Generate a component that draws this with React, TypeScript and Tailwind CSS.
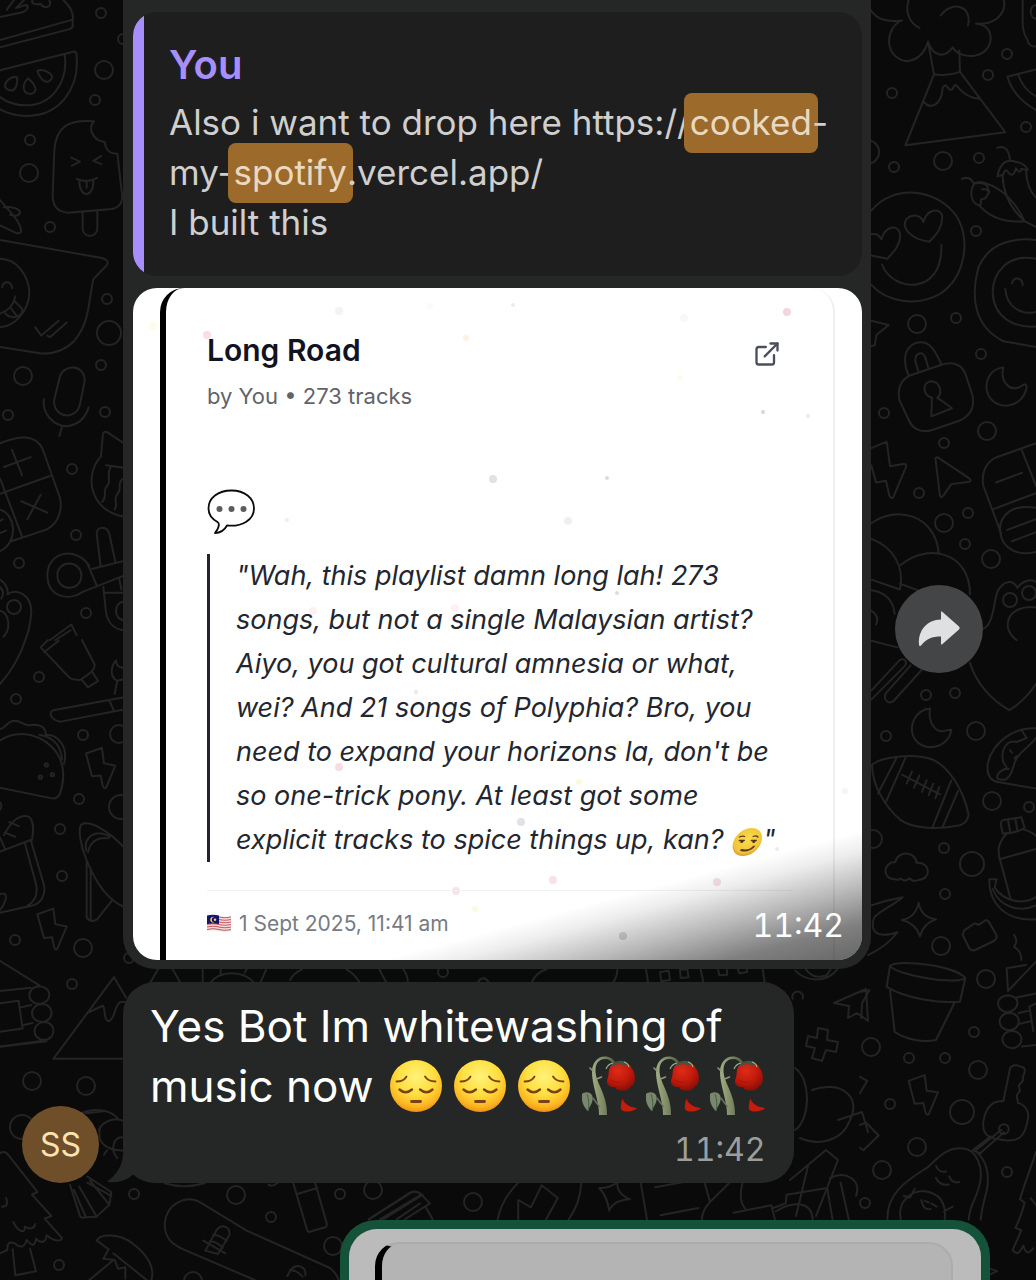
import * as React from "react"
import { ExternalLink } from "lucide-react"

// [x, y, radius] of the loose rings scattered over the wallpaper.
const RINGS = [
  [101, 13, 5], [104, 70, 9], [95, 100, 5], [30, 140, 5], [29, 173, 9], [50, 227, 5],
  [107, 299, 5], [109, 333, 12], [101, 365, 5], [23, 376, 9], [105, 412, 5], [8, 415, 5],
  [72, 469, 5], [76, 535, 5], [19, 563, 5], [86, 613, 5], [14, 607, 7], [123, 39, 5],
  [39, 677, 5], [16, 699, 5], [83, 735, 5], [119, 734, 9], [79, 799, 5], [60, 829, 5],
  [121, 807, 12], [62, 876, 5], [15, 940, 5], [83, 948, 9], [72, 984, 5], [32, 1081, 9],
  [86, 1086, 9], [22, 1127, 12], [59, 1265, 5], [129, 958, 5], [1007, 54, 5], [988, 75, 5],
  [892, 93, 5], [1026, 127, 5], [894, 167, 5], [943, 161, 9], [979, 158, 5], [867, 152, 12],
  [976, 231, 5], [917, 324, 9], [956, 318, 5], [981, 354, 5], [884, 413, 5], [944, 443, 5],
  [987, 431, 9], [919, 493, 5], [944, 523, 9], [968, 513, 5], [965, 544, 5], [991, 559, 9],
  [1010, 600, 7], [1029, 593, 7], [926, 695, 5], [955, 693, 5], [886, 736, 5], [976, 731, 9],
  [992, 801, 9], [1029, 807, 5], [944, 848, 5], [972, 864, 12], [873, 839, 9], [945, 894, 5],
  [941, 946, 9], [986, 979, 9], [974, 1032, 5], [871, 1047, 9], [909, 1058, 5], [945, 1058, 5],
  [978, 1070, 9], [890, 1104, 5], [962, 1112, 12], [917, 1147, 9], [882, 1170, 9],
  [1007, 1172, 5], [865, 1203, 5], [134, 1194, 5], [236, 1195, 9], [271, 1217, 5],
  [340, 1194, 5], [373, 1190, 9], [333, 1246, 9], [193, 1281, 9], [473, 1202, 9], [443, 972, 5],
]

// Doodles, grouped by the part of the wallpaper they sit in.
const DOODLES = [
  {
    transform: "scale(.3333 .4082)",
    paths: [
      // cake slice
      "M0 42 L68 30 C82 26 88 16 78 12 L48 20 L72 0 M20 24 L42 0 M98 0 C92 8 104 12 122 10 C130 22 154 18 150 6 L148 0 M190 0 C210 16 222 34 218 48 L0 98 M218 48 V64 Q216 70 206 72 L0 116",
      // melon slice
      "M0 172 L222 126 Q230 126 230 138 C238 220 176 284 82 284 Q34 284 0 268 M194 134 C206 206 150 258 78 258 Q32 258 0 238 M52 190 C30 184 8 206 18 216 C36 228 52 222 52 190 Z M84 192 C64 208 68 228 90 230 C112 228 114 212 84 192 Z M112 174 C128 166 158 180 156 190 C146 208 124 202 112 174 Z",
      // ice lolly
      "M282 297 C206 292 168 310 163 368 L158 478 C158 508 176 520 204 521 L336 512 Q370 506 366 476 L352 376 C334 378 318 370 314 348 C280 344 262 316 282 297 Z M248 522 V560 C250 584 290 584 292 560 V518 M214 386 L240 396 L216 406 M304 382 L280 394 L304 402 M230 438 Q262 450 292 436 M238 444 C238 486 282 486 280 442 M260 446 V460",
      // cap
      "M0 490 C30 520 60 540 64 566 Q62 574 46 570 L0 552 M12 508 C30 504 60 512 60 520 C58 530 44 530 30 526",
      // smiling note
      "M0 588 L306 632 Q330 638 320 650 L280 684 C264 748 268 790 224 834 Q184 868 124 866 L0 850 M0 634 C50 634 88 676 88 718 C86 762 44 800 0 802 M6 704 C10 688 34 686 36 706 M46 726 C40 748 24 762 0 768 M16 768 C24 776 44 780 54 774 Q70 768 66 756 L44 738 M34 756 L48 772 M106 802 L124 822 L176 786 M142 822 L150 826 L200 790",
      // microphone
      "M178 928 C186 890 256 890 254 934 L240 990 C230 1030 162 1026 162 982 Z M132 978 C124 1014 164 1044 200 1044 Q250 1040 266 998 M186 1046 L178 1068",
      // game pad
      "M0 1086 C60 1066 106 1064 128 1100 L180 1220 C190 1260 166 1290 130 1300 L34 1326 M0 1210 L150 1166 M0 1172 L66 1314 M36 1102 L66 1164 M12 1144 L92 1120 M64 1228 L142 1256 M122 1212 L82 1272 M0 1248 C50 1262 54 1330 0 1350 M0 1276 L8 1272 M0 1306 L18 1300",
      // wrapped sweet
      "M372 1086 L320 1058 Q308 1056 308 1070 L303 1118 C254 1160 264 1250 372 1266 M318 1140 L372 1146 M334 1142 C316 1160 336 1176 322 1190 C306 1200 324 1216 306 1230 M366 1174 C350 1188 368 1198 352 1210 C338 1226 356 1236 344 1248",
      // whistle and spoon
      "M268 1386 C226 1336 142 1352 142 1410 C144 1466 210 1472 248 1450 L372 1410 M262 1380 L290 1434 M172 1410 C172 1370 244 1372 244 1410 C244 1450 172 1450 172 1410 Z M276 1394 L372 1374 M302 1388 L290 1306 C292 1288 322 1288 328 1308 L346 1376 M310 1438 L318 1500 C324 1528 346 1542 372 1544 M312 1452 H372 M358 1418 L364 1444 M372 1474 C342 1474 338 1516 372 1520",
      // paw
      "M0 1420 C20 1430 26 1450 22 1456 C50 1440 94 1456 94 1500 Q90 1540 76 1568 M0 1496 C28 1502 34 1540 10 1560 M0 1438 Q16 1450 4 1466 M150 1568 L214 1530 L230 1556 M166 1568 L212 1544",
    ],
  },
  {
    transform: "translate(0 640) scale(.3333 .4082)",
    paths: [
      "M76 0 C60 40 30 80 0 108",
      // bottle
      "M122 18 L208 92 Q218 98 240 98 L262 86 Q286 72 284 60 L246 0 M122 18 L144 0 M132 30 L176 2 M246 98 L264 116 L294 100 L278 80",
      // toothbrush
      "M372 140 L160 172 C144 178 152 196 182 200 L372 170 M328 148 L342 174 M344 132 L352 100 C328 90 332 66 348 50 Q352 72 372 66 M352 100 L372 96",
      // taco
      "M0 218 C20 216 20 198 44 198 C66 198 70 212 92 208 Q136 204 138 232 C180 232 204 266 192 304 M0 246 C60 214 134 234 170 276 C200 314 190 352 180 376 Q172 390 156 388 L0 362 M118 232 C170 238 184 270 186 292 M134 306 a5 4 0 1 0 10 0 a5 4 0 1 0 -10 0 M116 336 a5 4 0 1 0 10 0 a5 4 0 1 0 -10 0 M152 330 a5 4 0 1 0 10 0 a5 4 0 1 0 -10 0",
      // lightning
      "M258 278 L306 264 L312 302 L346 308 L318 362 Q312 366 308 356 L302 332 L276 334 Z",
      // bread
      "M0 398 Q8 406 0 416 M12 478 C36 440 64 424 88 434 C104 446 100 470 96 490 M28 446 L56 456 M14 472 L46 482 M0 518 L92 490 L132 600 C138 626 122 644 100 650 L0 668 M74 496 L108 598 C114 622 104 640 84 650 M0 484 L14 510 M0 622 Q24 618 16 638 Q10 652 0 662",
      // bowling pin
      "M372 508 C330 470 270 440 244 452 C232 464 244 510 260 540 C290 600 330 640 372 654 M260 540 V680 Q272 694 292 684 L338 636 M272 560 V684 M258 516 C250 480 290 462 330 482 M264 520 C270 490 300 482 326 486",
      // lightning
      "M112 672 L160 658 L166 696 L200 702 L172 756 Q166 762 162 750 L156 728 L132 730 Z",
      // logs
      "M0 786 L118 846 M0 860 L92 852 M118 848 C158 850 158 888 118 892 C78 890 78 850 118 848 Z M126 892 C164 892 164 934 126 936 C86 934 86 894 126 892 Z M132 936 C170 936 170 978 132 980 C94 978 94 938 132 936 Z M0 890 L56 884 L68 952 L0 960 M62 900 L94 894 M68 944 L98 938 M0 996 L130 982",
      // mountain
      "M378 876 L342 826 L160 1026 H372 M266 912 L308 896 C318 900 308 930 326 934 C350 930 340 876 378 888",
    ],
  },
  {
    transform: "translate(860 0) scale(.3333 .4082)",
    paths: [
      // volcano
      "M30 22 C50 50 90 54 126 50 C76 66 68 140 140 150 Q188 146 204 102 C222 144 256 140 278 116 C304 150 390 144 392 94 C392 70 370 58 348 58 C400 62 440 36 432 0 M146 0 C134 30 150 58 178 68 M242 38 C276 0 338 14 324 62 M204 102 L222 182 L136 356 L436 324 L300 176 L298 124 M222 182 Q260 188 300 176 M192 250 C210 268 244 260 248 216 C258 198 264 222 272 220 C284 220 280 200 292 212 Q320 240 360 242",
      "M488 0 V60 Q492 88 502 96 Q506 116 528 114 M528 12 C506 14 508 44 528 46",
      "M528 170 L442 188 Q462 240 528 270 M474 182 Q490 220 528 236",
      // chillies
      "M306 438 Q330 430 342 450 M342 450 C326 472 336 500 356 502 C390 534 440 546 494 542 C470 500 430 462 380 450 Q358 442 342 450 M342 450 C364 446 374 450 380 454 M380 454 L388 470 L376 486 L364 488 L362 502 M366 464 Q376 460 388 470 M412 362 Q444 352 450 392 M412 432 C420 400 440 388 466 396 Q494 400 504 416 L484 414 Q480 428 468 412 Q460 436 446 424 Q436 408 430 428 Z M428 432 C430 470 450 510 494 542 L528 556 M498 418 C500 450 510 470 528 484",
      // smiley with heart eyes
      "M34 516 C100 450 230 460 290 530 C334 590 314 680 240 720 C170 752 80 740 34 698 M66 648 C96 716 250 726 244 600 M208 592 C150 586 122 556 140 536 C160 522 184 528 190 544 C200 514 234 508 246 526 C250 552 230 576 208 592 Z M34 574 Q54 570 64 586 C76 554 112 548 120 572 C124 598 100 618 82 634 L34 626",
      // sunny sticker
      "M528 588 C470 582 390 590 356 654 C330 730 344 800 430 836 L528 850 M528 634 C440 620 398 670 398 718 C402 776 460 804 528 800 M436 708 C440 756 490 772 528 764 M456 694 C460 678 486 678 488 698",
      // star tip
      "M34 786 L86 796 L50 820 L44 846 L34 848",
      // padlock
      "M146 920 C128 886 130 852 168 840 C204 832 220 850 244 892 M176 912 L166 886 C164 862 190 860 196 876 L206 904 M150 920 L236 896 C280 882 308 894 318 920 L338 970 C344 1000 328 1020 300 1030 L214 1054 C176 1062 156 1046 148 1032 L118 980 C112 950 124 930 150 920 Z M216 974 C190 972 184 938 212 934 C242 934 248 964 232 974 L276 1000 L214 1020 Z",
      // moon
      "M430 900 C390 904 370 936 384 966 C410 1010 490 1000 500 948 Q498 936 484 946 C450 962 420 936 430 900 Z",
      // lightning and cursor
      "M34 1098 L80 1082 L90 1142 L134 1136 Q142 1138 136 1148 L100 1218 Q94 1224 88 1214 L78 1178 L48 1182 L34 1140 M226 1122 L240 1214 Q244 1222 250 1214 L274 1186 L328 1180 Q336 1178 328 1172 L232 1120 Z",
      // pill box
      "M528 1086 L410 1120 C376 1132 364 1160 370 1190 L424 1308 M484 1100 L528 1190 M398 1248 L528 1208 M408 1182 L486 1158 M528 1244 C460 1234 418 1260 420 1300 C426 1350 480 1362 528 1352 M442 1298 L528 1272 M456 1326 L528 1304",
      // mushroom cloud
      "M34 1282 C110 1236 226 1262 236 1354 M34 1320 C100 1340 134 1388 120 1444 L34 1420 M122 1384 C200 1330 330 1350 330 1456 M120 1430 L180 1448 M34 1446 Q98 1454 104 1504 M34 1496 Q60 1510 48 1530",
      "M370 1540 C400 1530 400 1480 412 1450 C430 1420 460 1420 472 1440 C490 1420 516 1418 528 1426 M528 1488 C440 1480 420 1540 470 1568",
    ],
  },
  {
    transform: "translate(860 640) scale(.3333 .4082)",
    paths: [
      "M34 2 L112 18 M34 124 L118 50 C134 42 144 54 134 64 L34 146 M152 62 L78 130 C68 146 84 158 100 150 L184 74 M330 56 C350 110 400 150 448 172 Q496 148 528 108",
      // moon
      "M210 168 C168 172 146 206 160 236 C186 280 266 266 274 220 L256 222 C226 230 204 202 210 168 Z",
      // rugby ball
      "M36 306 C60 286 160 276 222 294 C270 316 310 366 326 428 Q322 448 300 454 C240 464 160 464 120 440 C76 408 38 360 36 306 Z M110 288 L54 376 M138 286 L76 400 M274 344 L218 458 M294 370 L248 458 M126 330 L240 378 M156 322 L140 352 M178 332 L162 362 M200 344 L186 372 M220 352 L206 380 M238 360 L226 388",
      // cloud
      "M104 586 C66 586 68 544 106 544 C112 516 166 516 170 546 C210 542 218 586 174 588 C162 594 154 588 148 584 Q136 594 122 584 Q114 590 104 586 Z",
      // fish tail, sparkle
      "M34 650 C70 640 100 634 128 630 C100 650 60 662 42 680 C30 710 44 734 112 716 C86 746 50 762 24 772 M176 644 Q184 680 228 684 Q190 694 180 726 Q168 694 126 686 Q166 680 176 644 Z",
      // camera
      "M312 712 L344 694 L356 698 L378 686 Q388 688 392 698 L410 724 Q410 734 400 738 L344 760 Q330 762 326 752 L308 722 Z",
      // flower pot
      "M90 798 C120 780 290 800 316 828 C290 846 110 822 90 798 Z M90 798 L80 850 C140 880 240 890 300 886 L316 828 M90 858 L104 960 C140 980 190 986 228 980 L284 888",
      // burrito
      "M528 216 C460 214 400 250 384 300 C378 330 390 344 414 348 L528 364 M528 240 C500 270 480 270 464 300 Q450 344 430 342 Q402 344 416 326 Q430 314 446 316 M470 250 C430 240 414 290 440 312 M470 250 L500 240 L484 220 M450 270 L456 276 M464 290 L470 284",
      // flask and banana
      "M428 474 L422 450 Q424 440 440 440 L484 434 L494 460 Q470 474 428 474 Z M444 440 L450 468 M466 438 L472 466 M440 474 C410 500 412 520 424 550 L452 636 M424 536 L528 512 M490 464 Q516 470 528 480 M388 586 L410 586 L404 606 C430 640 490 650 528 630 M388 586 C386 640 430 690 528 684 M398 610 C420 656 480 668 528 650",
      // camp fire
      "M462 722 C476 740 466 744 462 752 Q484 760 484 784 M440 804 L498 796 M440 804 L444 860 L528 788 M444 870 C484 872 480 908 442 912 C404 908 404 872 444 870 Z M448 914 C486 914 486 954 448 956 C408 954 410 914 448 914 Z M456 958 C494 958 494 998 456 1000 C418 998 418 958 456 958 Z M470 876 L528 866 M476 914 L508 908 M480 940 L512 934 M508 898 L520 958 M486 996 L528 992 M528 890 L508 898",
      // stars
      "M0 862 L28 858 L6 890 L4 926 M0 1070 L22 1080 L0 1110 M0 1188 L18 1182 L56 1214 L10 1250 L0 1244",
      // lightning
      "M146 1080 L194 1066 L200 1104 L234 1108 L206 1162 Q200 1166 196 1156 L190 1134 L164 1136 Z",
      // key
      "M430 1130 L450 1050 Q456 1040 472 1042 L492 1048 Q498 1058 488 1070 L490 1078 L476 1092 L480 1104 L470 1116 L474 1134 C500 1140 510 1160 502 1180 C494 1220 470 1228 440 1226 C400 1222 364 1220 370 1180 C378 1140 400 1128 430 1130 Z M432 1186 C454 1188 448 1212 430 1210 C412 1208 412 1188 432 1186 M424 1200 L348 1250 M432 1206 L362 1256 M392 1216 L338 1250 L362 1258",
      // avocado
      "M82 1420 C80 1350 150 1320 206 1290 C240 1262 270 1240 310 1246 C350 1250 370 1290 360 1330 C350 1370 330 1380 326 1420 M342 1250 C380 1270 390 1310 380 1350 Q366 1390 362 1420 M122 1420 C110 1370 160 1350 190 1350 C240 1354 260 1380 254 1420 M228 1288 Q236 1306 258 1302 M228 1318 Q240 1338 266 1334 M268 1314 Q276 1332 298 1328 M184 1372 Q190 1398 212 1394 M194 1374 L206 1378 M214 1380 L230 1388 M132 1362 L150 1366 L164 1344 M252 1400 L278 1388",
      // tree
      "M528 1254 C510 1300 490 1340 480 1370 L494 1378 Q480 1420 466 1440 L484 1446 Q466 1480 458 1494 C470 1510 480 1500 490 1484 C500 1510 510 1500 520 1490 M512 1368 L528 1384 M390 1540 L412 1546 L390 1554",
    ],
  },
  {
    transform: "translate(0 1040) scale(.3333)",
    paths: [
      "M0 20 L140 4",
      // bouquet
      "M240 222 C280 200 340 210 356 240 M296 270 C310 240 350 232 368 242 M300 268 C290 300 310 330 370 332 M368 292 C340 290 330 330 352 354 M258 220 L310 214 M312 344 L322 330",
      "M210 434 L240 528 Q244 536 258 532 L290 530 L328 494 L334 456 L262 410 M222 450 L258 532 M238 440 L290 530 M270 422 L328 494 M262 428 L334 468",
      // pine tree
      "M0 340 Q14 330 26 346 L112 456 L96 464 L154 528 L134 536 L186 594 C186 606 160 604 140 586 Q134 620 108 596 Q104 630 80 600 Q70 634 44 610 Q20 600 22 630 L0 640 M38 628 L46 706 L108 694 L90 626 M6 500 Q28 500 18 474 M40 546 C56 580 78 580 74 560 Q100 574 106 552",
      // umbrella
      "M290 602 C300 580 360 580 400 612 C450 650 464 690 454 720 M290 602 L326 628 L310 656 L344 660 L354 686 L376 682 L376 716 M340 640 L440 720 M336 664 L268 720",
      // skateboard
      "M606 490 C560 460 500 490 494 550 C494 590 510 610 550 628 L764 720 M606 490 L740 572 L990 684 Q1010 700 1016 720 M616 632 L650 570 C666 550 692 560 688 586 L654 642 Z M640 584 Q660 584 680 604 M630 604 Q650 604 668 624 M610 602 L676 640 M862 708 L872 690 C890 668 920 680 916 706 M870 690 Q890 690 908 710",
      // torch
      "M880 430 L922 572 Q926 578 934 574 L976 562 Q982 558 980 550 L946 430 M892 462 L952 444 M806 434 Q816 442 832 430 M494 430 Q550 448 614 430",
      "M1106 538 L1230 458 Q1250 450 1260 462 M1140 538 L1260 466 M1190 538 L1260 490",
    ],
  },
  {
    transform: "translate(330 1180) scale(.4503 .3333)",
    paths: [
      "M86 118 L180 38 Q190 32 200 40 L222 70 L166 118 M118 118 L206 44 M212 80 L228 118",
      "M372 120 Q380 60 418 8 M418 118 V60 L446 82 L470 16 L506 54 L480 118 M558 8 Q556 70 530 118",
      "M598 24 Q616 26 638 8 Q636 40 666 58 Q630 60 620 92 Q616 50 598 24 Z",
      "M690 8 L704 118 M722 22 L786 6 M734 106 L818 84 M832 8 L844 66 L886 10 M844 66 Q826 92 826 118",
      "M916 8 Q906 60 922 86 M896 98 L980 76 L988 118 M984 84 L1012 70 L1014 44 L1104 24 L1116 118 M990 94 C1030 60 1070 66 1072 118 M1134 8 L1152 118",
    ],
  },
  {
    transform: "translate(130 840) scale(.3333)",
    paths: [
      "M60 430 L84 388 M128 388 L152 430 M218 388 V430 M240 430 C270 390 340 390 374 430 M272 388 V404 M344 398 L350 388 M390 430 L408 390 M480 420 Q490 400 516 388 M650 388 Q676 404 688 426 M748 388 L768 426 M820 388 Q832 404 834 426 M1044 426 Q1060 404 1076 426 M1206 426 Q1220 396 1250 388",
    ],
  },
  {
    transform: "translate(560 800) scale(.3333)",
    paths: [
      "M172 508 Q172 530 160 546 M258 508 L264 546 M300 516 L326 512 L330 540 L304 544 Z M360 510 L382 508 L386 532 L362 534 Z M422 508 L430 546 M474 508 L478 526 L502 524 L500 508 M534 508 L538 520 L562 516 L560 508 M608 508 L614 546 M706 512 C740 548 800 548 832 508 M738 508 Q760 540 800 526 L812 508 M698 596 a16 16 0 1 1 30 0",
    ],
  },
  {
    // shapes that peek out beside the second bubble
    transform: "translate(0 0)",
    paths: [
      "M818 1028 L828 1030 L827 1040 L838 1042 L836 1052 L826 1050 L822 1061 L812 1058 L815 1048 L806 1046 L808 1036 L817 1038 Z",
      "M834 1003 L866 989 L868 1021 L857 1013 L848 1018 L849 1006 Z M795 1068 C812 1080 810 1120 795 1130 M812 1090 C840 1080 862 1096 850 1120 C842 1142 818 1146 800 1138 M838 1120 L862 1112 L868 1132",
      "M790 1180 L826 1150 L838 1160 L816 1216 M808 1166 L796 1216 M830 1178 C846 1170 862 1180 856 1196",
    ],
  },
]

function Wallpaper() {
  return (
    <svg
      className="absolute left-0 top-0 h-[1280px] w-[1036px]"
      viewBox="0 0 1036 1280"
      fill="none"
      stroke="#242424"
      strokeWidth="2"
      strokeLinecap="round"
      strokeLinejoin="round"
      aria-hidden
    >
      {RINGS.map(([x, y, r]) => (
        <circle key={`${x}-${y}`} cx={x} cy={y} r={r} />
      ))}
      {DOODLES.map((group) => (
        <g key={group.transform} transform={group.transform}>
          {group.paths.map((d) => (
            <path key={d} d={d} vectorEffect="non-scaling-stroke" />
          ))}
        </g>
      ))}
    </svg>
  )
}

// Confetti specks drifting over the playlist card: [x, y, radius, colour].
const SPECKS: [number, number, number, string][] = [
  [20, 38, 4, "#fefbe8"], [74, 47, 4, "#f6dfe5"], [206, 23, 4, "#f3f3f4"], [333, 50, 3, "#fdf1e2"],
  [297, 18, 3, "#fafafa"], [380, 17, 2, "#ececee"], [551, 30, 4, "#f8f8f8"], [654, 24, 4, "#f5d5dc"],
  [547, 90, 3, "#fefbec"], [630, 124, 2, "#d8d8da"], [675, 128, 2, "#ebebeb"], [360, 191, 4, "#e1e2e8"],
  [474, 190, 2, "#dcdcde"], [435, 233, 4, "#f0f0f1"], [154, 232, 2, "#eeeef0"], [180, 323, 4, "#fdf1f4"],
  [322, 320, 4, "#fdf1f4"], [484, 305, 2, "#dcdcde"], [283, 404, 2, "#e8e8ea"], [206, 479, 4, "#f7dce2"],
  [484, 460, 4, "#fdf9dc"], [446, 494, 3, "#fdf9dc"], [388, 534, 4, "#e1e2e8"], [420, 592, 4, "#f8e2e7"],
  [584, 594, 4, "#f4dfe5"], [323, 603, 4, "#f8e2e7"], [342, 621, 3, "#fdfbdf"], [712, 503, 3, "#f5f5f5"],
  [490, 648, 4, "#dcdcdc"], [644, 561, 2, "#ececec"],
]

function Specks() {
  return (
    <svg className="absolute left-0 top-0 h-[671px] w-[728px]" viewBox="0 0 728 671" aria-hidden>
      {SPECKS.map(([x, y, r, fill]) => (
        <circle key={`${x}-${y}`} cx={x} cy={y} r={r} fill={fill} />
      ))}
    </svg>
  )
}

function SpeechBalloon() {
  return (
    <svg className="h-12 w-12" viewBox="0 0 48 48" role="img" aria-label="Speech balloon">
      <path
        d="M24.500 2.500C11 2.500 1.500 10 1.500 20.500c0 6.500 3.500 10.500 9 13.500 2.500 1.500 1.500 6-2.500 11 6 0 9.500-3 12-7.500 15.500 1.500 27-6 27-17 0-10.500-9.500-18-22.500-18Z"
        fill="#fff"
        stroke="#0a0a0a"
        strokeWidth="1.800"
        strokeLinejoin="round"
      />
      <circle cx="12.500" cy="21" r="3" fill="#5c5c5c" />
      <circle cx="24.500" cy="21" r="3" fill="#5c5c5c" />
      <circle cx="36.500" cy="21" r="3" fill="#5c5c5c" />
    </svg>
  )
}

function SmirkFace() {
  return (
    <svg className="inline-block h-8 w-8 align-middle" viewBox="0 0 32 32" role="img" aria-label="Smirking face">
      <defs>
        <radialGradient id="smirk" cx=".5" cy=".4" r=".6">
          <stop offset="0" stopColor="#f9dc4e" />
          <stop offset=".8" stopColor="#f0c53a" />
          <stop offset="1" stopColor="#d99a2b" />
        </radialGradient>
      </defs>
      <g transform="translate(5.500 0) skewX(-18)">
        <ellipse cx="16" cy="16" rx="14" ry="14" fill="url(#smirk)" />
        <g fill="none" stroke="#5a3a16" strokeWidth="1.300" strokeLinecap="round">
          <path d="M6.500 11q2.500-1.500 5-.5M20 10.500q2.500-1.500 5 .5" />
          <path d="M7.500 14.500h5M19.500 14.500h5" />
          <path d="M12.500 24q8 2 11.500-3.500" strokeWidth="1.900" />
        </g>
        <circle cx="10.500" cy="15.500" r="1.500" fill="#4a3216" />
        <circle cx="22.500" cy="15.500" r="1.500" fill="#4a3216" />
      </g>
    </svg>
  )
}

function MalaysiaFlag() {
  return (
    <svg className="h-5 w-6" viewBox="0 0 24 20" role="img" aria-label="Malaysia">
      <path d="M0 2q6-1.500 12 0t12 0v15q-6 1.500-12 0t-12 0Z" fill="#f2dede" />
      <path
        d="M0 3q6-1.500 12 0t12 0M0 5.500q6-1.500 12 0t12 0M0 8q6-1.500 12 0t12 0M0 10.500q6-1.500 12 0t12 0M0 13q6-1.500 12 0t12 0M0 15.500q6-1.500 12 0t12 0"
        fill="none"
        stroke="#c9595f"
        strokeWidth="1.200"
      />
      <path d="M0 1.500q6-1.500 12 0V10q-6-1-12 0Z" fill="#17146e" />
      <path d="M7.500 3a3 3 0 1 0 0 5.400 2.300 2.300 0 1 1 0-5.400Z" fill="#f3d84a" />
      <circle cx="8" cy="5.700" r="1.200" fill="#f3d84a" />
    </svg>
  )
}

function PensiveFace() {
  return (
    <svg className="h-[60px] w-16" viewBox="0 0 64 60" role="img" aria-label="Pensive face">
      <defs>
        <radialGradient id="pensive" cx=".5" cy=".32" r=".7">
          <stop offset="0" stopColor="#fff27a" />
          <stop offset=".5" stopColor="#fedf3f" />
          <stop offset=".82" stopColor="#fbb622" />
          <stop offset="1" stopColor="#ee8a12" />
        </radialGradient>
      </defs>
      <circle cx="26" cy="30" r="26" fill="url(#pensive)" />
      <g fill="none" stroke="#7a4210" strokeWidth="1.800" strokeLinecap="round">
        <path d="M6.500 25.500q7.500 0 10-5M35 20.500q3 5 10.500 5" />
        <path d="M9.500 33.500q6 5.500 12.500 0M30 33.500q6.500 5.500 12.500 0" strokeWidth="2.400" />
        <path d="M21.500 45.500h9" strokeWidth="2.800" />
      </g>
    </svg>
  )
}

function WiltedRose() {
  return (
    <svg className="h-[60px] w-16" viewBox="0 0 64 60" role="img" aria-label="Wilted flower">
      <defs>
        <linearGradient id="stem" x1="0" y1="0" x2="1" y2="0">
          <stop offset="0" stopColor="#a3ad86" />
          <stop offset=".5" stopColor="#7b8762" />
          <stop offset="1" stopColor="#4d5940" />
        </linearGradient>
        <radialGradient id="petals" cx=".4" cy=".3" r=".75">
          <stop offset="0" stopColor="#df2c17" />
          <stop offset=".55" stopColor="#c01a0c" />
          <stop offset="1" stopColor="#860e07" />
        </radialGradient>
      </defs>
      {/* stem tapers into the bend above the bloom */}
      <path
        d="M17 59C17.500 46 9.500 28 10 15 10.500 6 16 .5 22.500 .5c5.500 0 9 2.500 11.500 7l-2.500 1c-2-3.500-4.500-5.500-8.500-5.500-5.500 0-9.500 4-9.500 11.500C13.500 27 25.500 38 25 59Z"
        fill="url(#stem)"
      />
      <path d="M11 15l-3-3M14.500 23l5-2" stroke="#8d9972" strokeWidth="1.600" strokeLinecap="round" />
      <path d="M0 38C2 36 8 35 10.500 40c1 6-2 9-5 15C1 50-1 44 0 38Z" fill="#78886c" />
      <path d="M6 55Q8 46 5 38" fill="none" stroke="#56644b" strokeWidth="1.200" />
      <path d="M11 42q4 6 7 9" fill="none" stroke="#6b7858" strokeWidth="1.400" />
      {/* bloom hangs to the right, one petal has dropped */}
      <path
        d="M29 10C33 5 46 5 49 11c3 4 5 9 3.500 15-.5 3-2 4-3.500 4-2 4-5 5-8 4.500-3 .5-6-.5-8-3.500-4 0-7-1-8-4-.5-3 1-5 1.500-8 .5-4 0-6 2.500-9Z"
        fill="url(#petals)"
      />
      <path
        d="M33 31Q38 30 41 34M49 30Q45 28 41 34M29 24Q34 28 38 26"
        fill="none"
        stroke="#8f1109"
        strokeWidth="1"
        opacity=".6"
      />
      <path d="M28 11q2-5 9-6 8-1 10 5-4-2-7-1-4-2-6 0-3 0-6 2Z" fill="#46543f" />
      <path d="M24 13q2-5 7-6M42 6q4 1 5 5" fill="none" stroke="#a3ad95" strokeWidth="1.200" />
      <path d="M40 42c2 5 6 9 15 10-3 4-14 5-16 1-1-3 1-7 1-11Z" fill="#c51c0e" />
    </svg>
  )
}

function Highlight({ children }: { children: React.ReactNode }) {
  return (
    <mark className="-mx-1.5 rounded-lg bg-[#9c6a2b] px-1.5 pb-2.5 pt-2 text-[#ead9bf]">{children}</mark>
  )
}

const ROAST_LINES = [
  '"Wah, this playlist damn long lah! 273',
  "songs, but not a single Malaysian artist?",
  "Aiyo, you got cultural amnesia or what,",
  "wei? And 21 songs of Polyphia? Bro, you",
  "need to expand your horizons la, don't be",
  "so one-trick pony. At least got some",
]

function QuotedMessage() {
  return (
    <blockquote className="overflow-hidden rounded-3xl bg-[#1e1e1e]">
      <div className="border-l-[11px] border-[#a78ffb] pb-[29px] pl-[25px] pr-6 pt-[29px]">
        <p className="text-[40px] font-semibold leading-12 text-[#a78ffb]">You</p>
        <p className="mt-2 whitespace-nowrap text-[35px] leading-[50px] text-[#cfcfcf]">
          Also i want to drop here https://<Highlight>cooked</Highlight>-
          <br />
          my-<Highlight>spotify</Highlight>.vercel.app/
          <br />I built this
        </p>
      </div>
    </blockquote>
  )
}

function PlaylistShot() {
  return (
    <figure className="relative mt-3 overflow-hidden rounded-3xl bg-white">
      <Specks />
      <div className="relative ml-[27px] mr-[27px] rounded-t-3xl border-l-[6px] border-r-2 border-l-black border-r-[#f0f0f0] pb-5 pl-[41px] pr-10 pt-10">
        <header className="flex items-start justify-between">
          <div>
            <h2 className="text-[30px] font-semibold leading-[44px] text-[#12131f]">Long Road</h2>
            <p className="mt-2 text-[22px] leading-8 text-[#5f646d]">by You • 273 tracks</p>
          </div>
          <a href="#playlist" aria-label="Open playlist" className="mr-3 mt-3">
            <ExternalLink className="size-7 text-[#4b4f5c]" />
          </a>
        </header>

        <div className="mt-[76px]">
          <SpeechBalloon />
        </div>
        <p className="mt-[18px] whitespace-nowrap border-l-[3px] border-[#23242f] pl-[26px] text-[27px] italic leading-[44px] text-[#23262f]">
          {ROAST_LINES.map((line) => (
            <span key={line} className="block">
              {line}
            </span>
          ))}
          <span className="block">
            explicit tracks to spice things up, kan? <SmirkFace />"
          </span>
        </p>

        <footer className="mt-7 flex items-center gap-2 border-t border-[#f1f1f2] pt-[17px] text-[21px] leading-8 text-[#777b83]">
          <MalaysiaFlag />
          <span>1 Sept 2025, 11:41 am</span>
        </footer>
      </div>
      <div className="absolute bottom-0 right-0 h-[130px] w-[480px] bg-[linear-gradient(to_bottom_right,transparent_50%,rgba(0,0,0,0.07)_58%,rgba(0,0,0,0.28)_72%,rgba(0,0,0,0.5)_86%,rgba(0,0,0,0.6)_100%)]" />
      <time className="absolute bottom-3.5 right-[18px] text-[32px] leading-10 tabular-nums text-white">
        11:42
      </time>
    </figure>
  )
}

function ForwardButton() {
  return (
    <button
      type="button"
      aria-label="Forward"
      className="mt-72 flex size-[88px] shrink-0 items-center justify-center rounded-full bg-[#434547]"
    >
      <svg className="h-10 w-12" viewBox="0 0 48 40" aria-hidden>
        <path
          d="M26 3.500Q26 1.500 27.500 3L44 17.500Q45.500 19 44 20.500L27.500 35Q26 36.500 26 34.500V27.500C17 27.500 11 30 6.500 36Q4.500 38.500 4 35.500C3 21 12 11 26 10.500Z"
          fill="#dfe0e1"
        />
      </svg>
    </button>
  )
}

export default function App() {
  return (
    <main className="relative h-screen overflow-hidden bg-[#0a0a0a] font-['Inter',sans-serif]">
      <Wallpaper />
      <div className="relative">
        <div className="flex items-center gap-6 pl-[123px]">
          <article className="w-full max-w-[748px] rounded-b-[32px] bg-[#242726] pb-[9px] pl-2.5 pr-[9px] pt-3">
            <QuotedMessage />
            <PlaylistShot />
          </article>
          <ForwardButton />
        </div>

        <div className="mt-[13px] flex items-end gap-6 pl-[22px]">
          <div className="flex size-[77px] shrink-0 items-center justify-center rounded-full bg-[#6e4f29] text-[32px] text-[#fde2b4]">
            SS
          </div>
          <article className="relative rounded-[32px] bg-[#242726] pb-[13px] pl-[27px] pr-7 pt-3.5">
            <svg className="absolute -left-4 bottom-0 h-[30px] w-7" viewBox="0 0 28 30" aria-hidden>
              <path d="M16 0C16 13 9 22 0 28.500Q14 32 27 21L28 0Z" fill="#242726" />
            </svg>
            <p className="whitespace-nowrap text-[44px] leading-[60px] text-white">
              Yes Bot Im whitewashing of
              <span className="-mr-2 flex">
                <span className="mr-4">music now</span>
                <PensiveFace />
                <PensiveFace />
                <PensiveFace />
                <WiltedRose />
                <WiltedRose />
                <WiltedRose />
              </span>
            </p>
            <time className="mt-3.5 block text-right text-[32px] leading-10 tabular-nums text-[#9c9e9d]">
              11:42
            </time>
          </article>
        </div>

        <article className="ml-auto mr-[46px] mt-[37px] w-[650px] rounded-t-[36px] bg-[#15523a] px-[9px] pt-[9px]">
          <div className="rounded-t-[28px] bg-[#bbbbbb] pl-[26px] pr-7 pt-[13px]">
            <div className="h-40 rounded-t-3xl border-l-[7px] border-r-2 border-t-2 border-[#acacac] border-l-black bg-[#b4b4b4]" />
          </div>
        </article>
      </div>
    </main>
  )
}
